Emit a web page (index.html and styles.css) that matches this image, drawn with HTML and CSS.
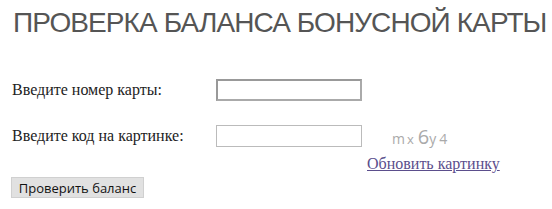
FILE: index.html
```html
<!DOCTYPE html>
<html lang="ru">
<head>
  <meta charset="UTF-8" />
  <title>Проверка баланса</title>
  <link rel="stylesheet" href="styles.css">
</head>
<body>

  <h1 class="title">ПРОВЕРКА БАЛАНСА БОНУСНОЙ КАРТЫ</h1>

  <form class="balance-form">
    <div class="form-row">
      <label class="label" for="card">Введите номер карты:</label>
      <input id="card" class="field field-active" type="text">
    </div>
    <div class="form-row form-row-code">
      <label class="label" for="code">Введите код на картинке:</label>
      <input id="code" class="field" type="text">
      <span class="captcha">m<span class="cx">x</span><span class="c6">6</span>y<span class="c4">4</span></span>
    </div>
    <div class="refresh-row">
      <a class="refresh" href="#">Обновить картинку</a>
    </div>
    <button class="submit" type="button">Проверить баланс</button>
  </form>

</body>
</html>
```

FILE: styles.css
```css
body {
  margin: 0;
  padding: 0 10px;
  background: #fff;
  color: #111;
  font-family: 'Liberation Serif', serif;
}

.title {
  margin: 7px 0 0 3px;
  font-family: 'Liberation Sans', Arial, sans-serif;
  font-weight: normal;
  font-size: 28px;
  line-height: 32px;
  color: #555;
  letter-spacing: -0.9px;
  white-space: nowrap;
}

.balance-form {
  margin-top: 40px;
}

.form-row {
  display: flex;
  align-items: center;
  height: 22px;
  margin-bottom: 24px;
  padding-left: 2px;
}

.form-row-code {
  margin-bottom: 8px;
}

.label {
  width: 204px;
  font-size: 16px;
  color: #222;
}

.field {
  box-sizing: border-box;
  width: 146px;
  height: 22px;
  margin: 0;
  padding: 1px 3px;
  border: 1px solid #bbb;
  background: #fff;
}

.field-active {
  border: 2px solid #999;
  border-right-color: #aaa;
  border-bottom-color: #aaa;
}

.captcha {
  margin-left: 30px;
  padding-top: 2px;
  font-family: 'Open Sans', 'DejaVu Sans', sans-serif;
  font-size: 14px;
  color: #aaa;
}

.cx {
  margin-left: 2px;
  font-size: 13px;
}

.c6 {
  margin-left: 4px;
  font-size: 20px;
  line-height: 1;
}

.c4 {
  margin-left: 3px;
}

.refresh-row {
  height: 18px;
  padding-left: 357px;
  line-height: 18px;
}

.refresh {
  font-size: 16px;
  color: #5b4e8c;
}

.submit {
  display: block;
  margin-top: 4px;
  margin-left: 1px;
  width: 133px;
  height: 21px;
  padding: 0;
  font-family: 'Open Sans', 'DejaVu Sans', sans-serif;
  font-size: 13px;
  color: #111;
  background: #e1e1e1;
  border: 1px solid #d0d0d0;
}
```
